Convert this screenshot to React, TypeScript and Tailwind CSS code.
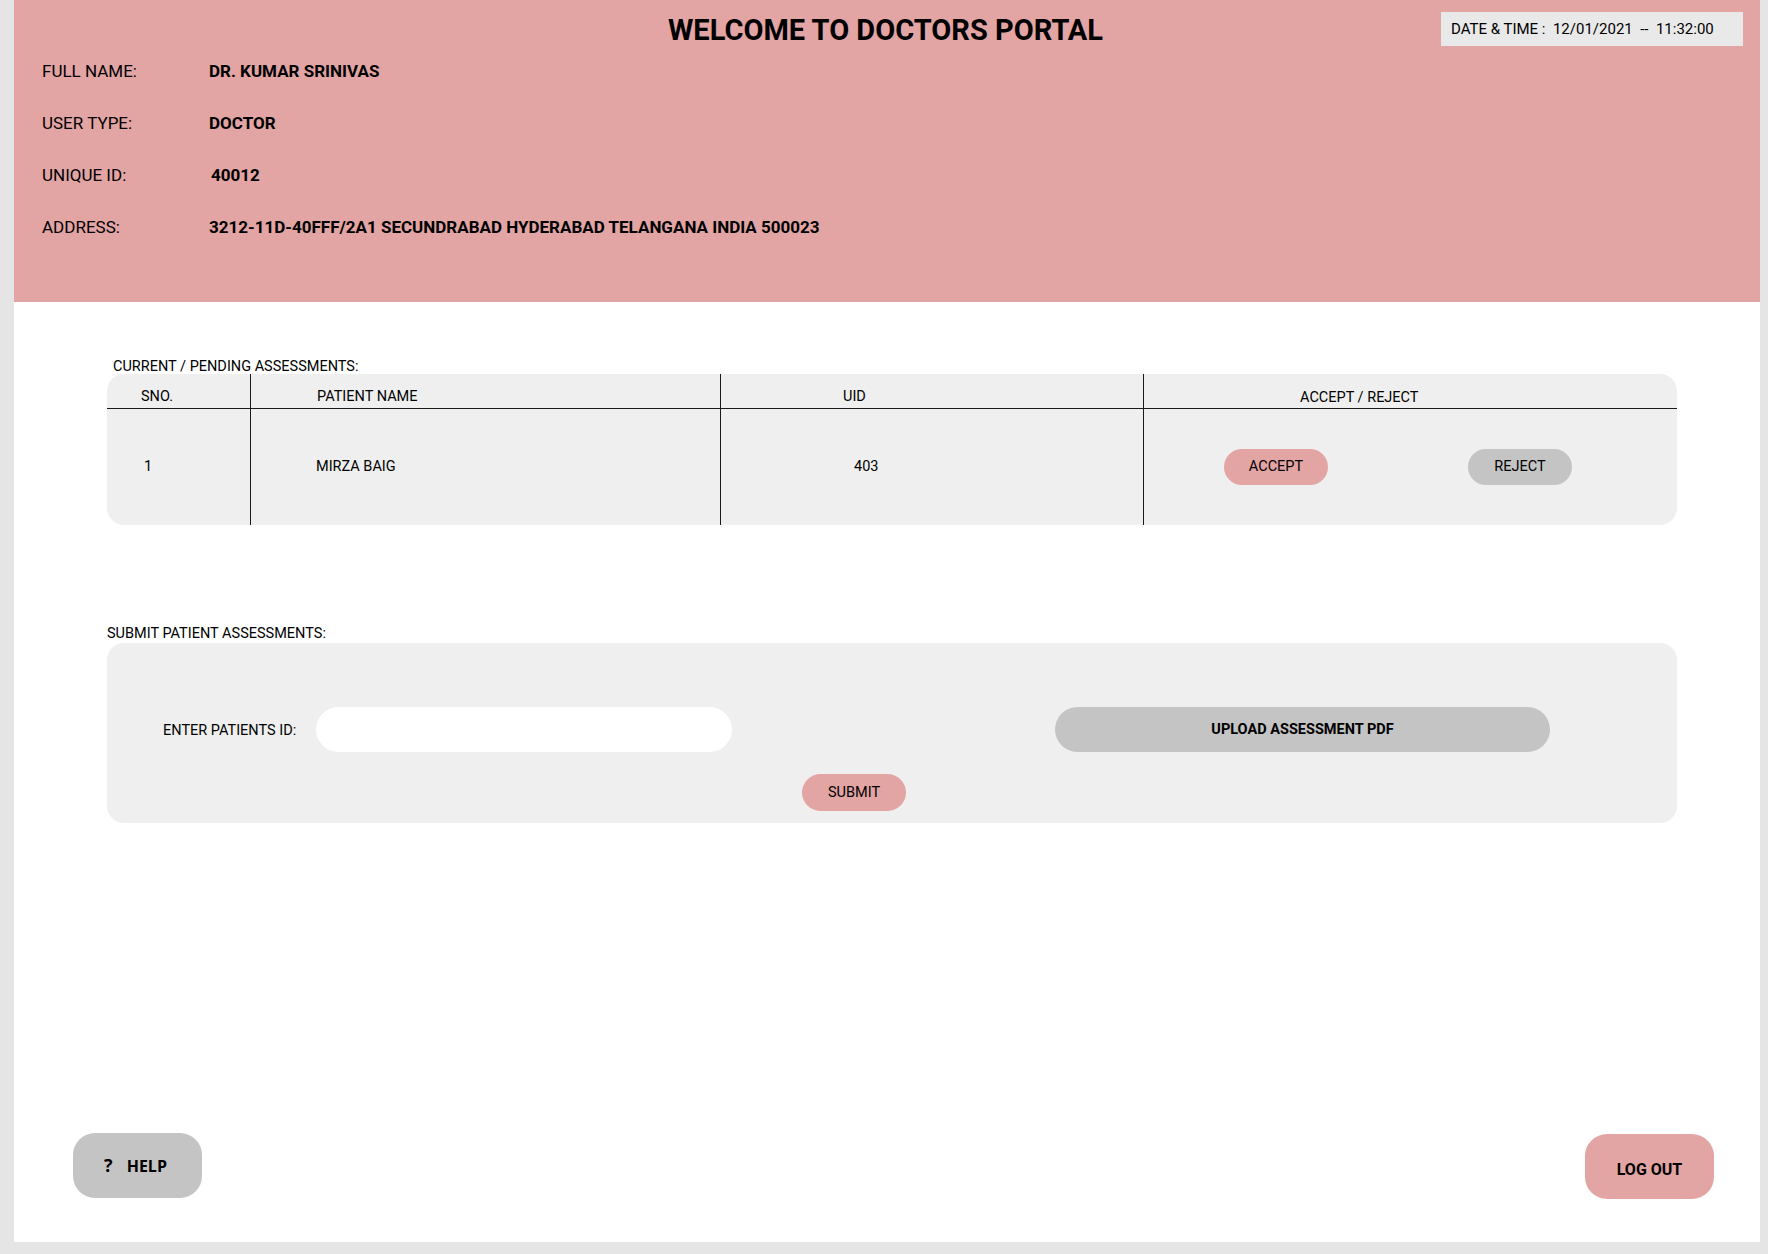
import React from "react";

const font = { fontFamily: "Roboto, 'Liberation Sans', sans-serif" };

function InfoRow({ label, value, shift = false }: { label: string; value: string; shift?: boolean }) {
  return (
    <div className="flex h-[52px] items-center text-[17px] text-black">
      <div className="w-[167px]">{label}</div>
      <div className={`font-bold ${shift ? "ml-[2px]" : ""}`}>{value}</div>
    </div>
  );
}

export default function App() {
  return (
    <div className="min-h-[1254px] w-full bg-[#e5e5e5]" style={font}>
      <div className="ml-[14px] flex h-[1242px] w-[1746px] flex-col bg-white">
        {/* Header */}
        <header className="h-[302px] bg-[#e3a4a4] pl-[28px] pr-[17px] pt-[12px]">
          <div className="grid h-[34px] grid-cols-[1fr_auto_1fr] items-center">
            <div />
            <h1 className="pr-[14px] pt-[2px] text-[29px] font-bold leading-none text-black">WELCOME TO DOCTORS PORTAL</h1>
            <div className="flex justify-end">
              <div className="flex h-[34px] w-[302px] items-center bg-[#e9e9e9] pl-[10px] text-[15px] whitespace-pre text-black">
                DATE &amp; TIME :  12/01/2021  --  11:32:00
              </div>
            </div>
          </div>
          <InfoRow label="FULL NAME:" value="DR. KUMAR SRINIVAS" />
          <InfoRow label="USER TYPE:" value="DOCTOR" />
          <InfoRow label="UNIQUE ID:" value="40012" shift />
          <InfoRow label="ADDRESS:" value="3212-11D-40FFF/2A1 SECUNDRABAD HYDERABAD TELANGANA INDIA 500023" />
        </header>

        {/* Main */}
        <main className="pl-[93px] pr-[83px] text-[14.5px] text-black">
          <div className="mt-[58px] pl-[6px] leading-[14px]">CURRENT / PENDING ASSESSMENTS:</div>
          <div className="grid h-[151px] grid-cols-[143px_470px_423px_1fr] grid-rows-[35px_1fr] rounded-[17px] bg-[#efefef]">
            {/* header row */}
            <div className="border-b-[1.5px] border-[#1a1a1a] pl-[34px] pt-[15px] leading-[15px]">SNO.</div>
            <div className="border-b-[1.5px] border-l border-[#1a1a1a] pl-[66px] pt-[15px] leading-[15px]">PATIENT NAME</div>
            <div className="border-b-[1.5px] border-l border-[#1a1a1a] pl-[122px] pt-[15px] leading-[15px]">UID</div>
            <div className="border-b-[1.5px] border-l border-[#1a1a1a] pl-[156px] pt-[16px] leading-[15px]">ACCEPT / REJECT</div>
            {/* body row */}
            <div className="flex items-center pl-[37px]">1</div>
            <div className="flex items-center border-l border-[#1a1a1a] pl-[65px]">MIRZA BAIG</div>
            <div className="flex items-center border-l border-[#1a1a1a] pl-[133px]">403</div>
            <div className="flex items-center border-l border-[#1a1a1a] pl-[80px]">
              <button className="h-[36px] w-[104px] rounded-full bg-[#e3a4a4] text-[14.5px] text-black">ACCEPT</button>
              <button className="ml-[140px] h-[36px] w-[104px] rounded-full bg-[#c4c4c4] text-[14.5px] text-black">REJECT</button>
            </div>
          </div>

          <div className="mt-[101px] leading-[16px]">SUBMIT PATIENT ASSESSMENTS:</div>
          <div className="mt-[1px] h-[180px] rounded-[17px] bg-[#efefef] pt-[64px]">
            <div className="flex items-center pl-[56px]">
              <span className="w-[153px] pt-[2px]">ENTER PATIENTS ID:</span>
              <input className="h-[45px] w-[416px] rounded-full bg-white px-4 outline-none" />
              <button className="ml-[323px] h-[45px] w-[495px] rounded-full bg-[#c4c4c4] text-[14.5px] font-bold text-black">
                UPLOAD ASSESSMENT PDF
              </button>
            </div>
            <div className="mt-[22px] pl-[695px]">
              <button className="h-[37px] w-[104px] rounded-full bg-[#e3a4a4] text-[14.5px] text-black">SUBMIT</button>
            </div>
          </div>
        </main>

        {/* Footer */}
        <footer className="mt-auto flex items-end justify-between pb-[43px] pl-[59px] pr-[46px]">
          <button className="mb-[1px] flex h-[65px] w-[129px] items-center justify-center gap-[14px] rounded-[22px] bg-[#c4c4c4] pr-[4px] text-[16px] font-bold text-black" style={{ fontFamily: "'Open Sans', 'Noto Sans', sans-serif" }}>
            <span className="text-[18px]">?</span>
            <span>HELP</span>
          </button>
          <button className="flex h-[65px] w-[129px] items-center justify-center rounded-[22px] bg-[#e3a4a4] pt-[6px] text-[16px] font-bold text-black">
            LOG OUT
          </button>
        </footer>
      </div>
    </div>
  );
}
